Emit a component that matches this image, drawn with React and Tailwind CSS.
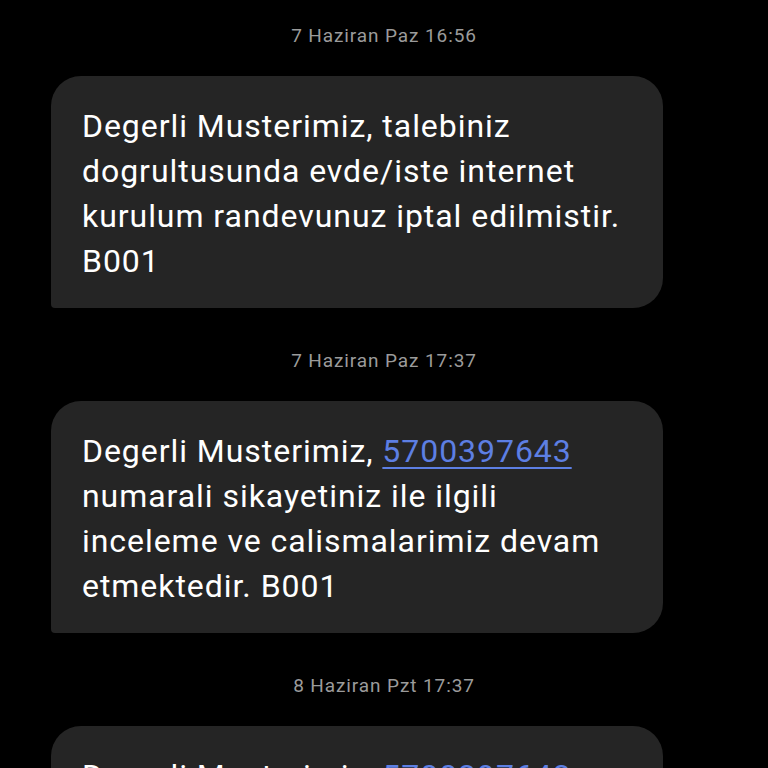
const messages = [
  {
    time: "7 Haziran Paz 16:56",
    lines: [
      ["Degerli Musterimiz, talebiniz"],
      ["dogrultusunda evde/iste internet"],
      ["kurulum randevunuz iptal edilmistir."],
      ["B001"],
    ],
  },
  {
    time: "7 Haziran Paz 17:37",
    lines: [
      ["Degerli Musterimiz, ", { link: "5700397643" }],
      ["numarali sikayetiniz ile ilgili"],
      ["inceleme ve calismalarimiz devam"],
      ["etmektedir. B001"],
    ],
  },
  {
    time: "8 Haziran Pzt 17:37",
    lines: [
      ["Degerli Musterimiz, ", { link: "5700397643" }],
      ["numarali sikayetiniz ile ilgili"],
      ["inceleme ve calismalarimiz devam"],
      ["etmektedir. B001"],
    ],
  },
];

export default function App() {
  return (
    <div className="h-[768px] overflow-hidden bg-black font-['Roboto',sans-serif]">
      <div className="flex flex-col pt-6">
        {messages.map((msg, i) => (
          <div key={i} className="flex flex-col">
            {/* timestamp */}
            <div className="text-center text-[19px] leading-6 tracking-[0.9px] text-[#9b9b9b]">{msg.time}</div>

            {/* bubble */}
            <div className="ml-[51px] mt-[28px] mb-[41px] w-[612px] rounded-[30px] rounded-bl-[4px] bg-[#252525] pl-[31px] pr-4 pt-[28px] pb-[24px] text-[32px] leading-[45px] tracking-[0.95px] text-white">
              {msg.lines.map((line, j) => (
                <div key={j} className="whitespace-nowrap">
                  {line.map((part, k) =>
                    typeof part === "string" ? (
                      <span key={k}>{part}</span>
                    ) : (
                      <span key={k} className="text-[#5d7fe3] underline decoration-[1.5px] underline-offset-[5px]">
                        {part.link}
                      </span>
                    )
                  )}
                </div>
              ))}
            </div>
          </div>
        ))}
      </div>
    </div>
  );
}
